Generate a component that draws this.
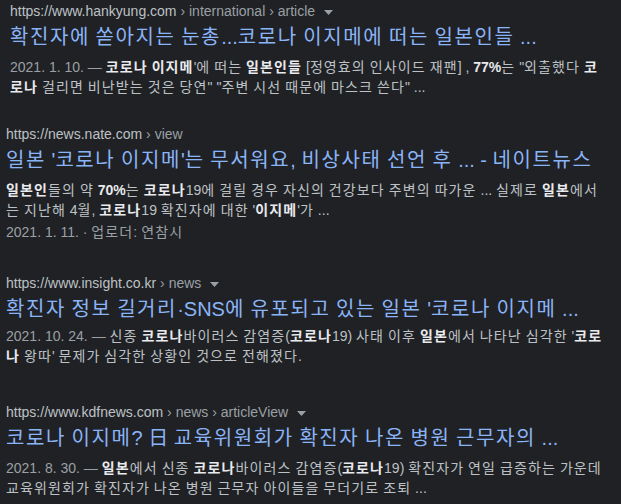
import React from "react";

const font = { fontFamily: '"Liberation Sans", "Noto Sans CJK KR", sans-serif' };
const HANGUL = /([\uAC00-\uD7A3\u3131-\u318E]+)/;

// widen Hangul runs so the CJK fallback matches the reference's full-width syllables
function kr(text, wide, keyBase) {
  return text.split(HANGUL).map((part, i) =>
    i % 2 === 1 ? (
      <span key={keyBase + "-" + i} className={wide}>
        {part}
      </span>
    ) : (
      part
    )
  );
}

// "**bold**" markers inside a snippet line
function line(str, wide) {
  return str.split("**").map((part, i) =>
    i % 2 === 1 ? (
      <b key={i} className="font-bold text-[#e8eaed]">
        {kr(part, wide, i)}
      </b>
    ) : (
      <React.Fragment key={i}>{kr(part, wide, i)}</React.Fragment>
    )
  );
}

function Caret() {
  return (
    <svg width="9" height="5" viewBox="0 0 9 5" className="ml-[9px] inline-block align-middle">
      <path d="M0 0 L9 0 L4.5 5 Z" fill="#9aa0a6" />
    </svg>
  );
}

function Result({ domain, crumbs, caret, title, date, lines, footer, className, snippetGap = "mt-[7px]" }) {
  const sw = "tracking-[1.12px]";
  return (
    <div className={className}>
      <div className="h-[20px] text-[14px] leading-[20px] whitespace-nowrap">
        <span className="text-[#bdc1c6]">{domain}</span>
        {crumbs.map((c) => (
          <span key={c} className="text-[#9aa0a6]">
            {" › "}
            {c}
          </span>
        ))}
        {caret && <Caret />}
      </div>
      <div className="mt-[3px] text-[20px] leading-[26px] text-[#8ab4f8] whitespace-nowrap">
        {kr(title, "tracking-[1.6px]", "t")}
      </div>
      <div className={snippetGap + " text-[14px] leading-[20px] text-[#bdc1c6] whitespace-nowrap"}>
        {lines.map((l, i) => (
          <div key={i}>
            {i === 0 && date && <span className="text-[#9aa0a6]">{date} — </span>}
            {line(l, sw)}
          </div>
        ))}
        {footer && <div className="mt-[2px] text-[#9aa0a6]">{kr(footer, sw, "f")}</div>}
      </div>
    </div>
  );
}

export default function App() {
  return (
    <div className="w-[621px] h-[504px] overflow-hidden bg-[#202124] pt-[1px]" style={font}>
      <Result
        className="pl-[10px]"
        domain="https://www.hankyung.com"
        crumbs={["international", "article"]}
        caret
        title="확진자에 쏟아지는 눈총...코로나 이지메에 떠는 일본인들 ..."
        date="2021. 1. 10."
        lines={[
          "**코로나 이지메**'에 떠는 **일본인들** [정영효의 인사이드 재팬] , **77%**는 \"외출했다 **코**",
          "**로나** 걸리면 비난받는 것은 당연\" \"주변 시선 때문에 마스크 쓴다\" ...",
        ]}
      />
      <Result
        className="pl-[6px] mt-[27px]"
        domain="https://news.nate.com"
        crumbs={["view"]}
        title="일본 '코로나 이지메'는 무서워요, 비상사태 선언 후 ... - 네이트뉴스"
        lines={[
          "**일본인**들의 약 **70%**는 **코로나**19에 걸릴 경우 자신의 건강보다 주변의 따가운 ... 실제로 **일본**에서",
          "는 지난해 4월, **코로나**19 확진자에 대한 '**이지메**'가 ...",
        ]}
        footer="2021. 1. 11. · 업로더: 연참시"
      />
      <Result
        className="pl-[6px] mt-[31px]"
        snippetGap="mt-[4px]"
        domain="https://www.insight.co.kr"
        crumbs={["news"]}
        caret
        title="확진자 정보 길거리·SNS에 유포되고 있는 일본 '코로나 이지메 ..."
        date="2021. 10. 24."
        lines={[
          "신종 **코로나**바이러스 감염증(**코로나**19) 사태 이후 **일본**에서 나타난 심각한 '**코로**",
          "**나** 왕따' 문제가 심각한 상황인 것으로 전해졌다.",
        ]}
      />
      <Result
        className="pl-[6px] mt-[36px]"
        domain="https://www.kdfnews.com"
        crumbs={["news", "articleView"]}
        caret
        title="코로나 이지메? 日 교육위원회가 확진자 나온 병원 근무자의 ..."
        date="2021. 8. 30."
        lines={[
          "**일본**에서 신종 **코로나**바이러스 감염증(**코로나**19) 확진자가 연일 급증하는 가운데",
          "교육위원회가 확진자가 나온 병원 근무자 아이들을 무더기로 조퇴 ...",
        ]}
      />
    </div>
  );
}
